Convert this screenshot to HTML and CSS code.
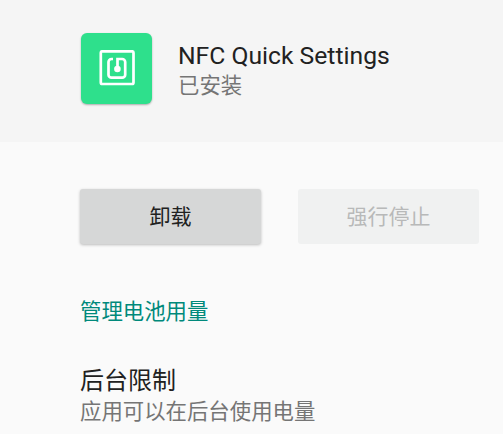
FILE: index.html
```html
<!DOCTYPE html>
<html lang="zh-CN">
  <head>
    <meta charset="UTF-8" />
    <meta name="viewport" content="width=device-width, initial-scale=1.0" />
    <title>NFC Quick Settings</title>
    <link rel="stylesheet" href="styles.css">
  </head>
  <body>
    <div class="app-header">
      <div class="app-icon">
        <svg width="36" height="36" viewBox="0 0 36 36" fill="none" stroke="#fff" stroke-width="2.7">
          <rect x="1.8" y="1.3" width="32.7" height="32.7" rx="1.5" />
          <path d="M14 9h-1.5a3 3 0 0 0-3 3v12.7a3 3 0 0 0 3 3h10.7a3 3 0 0 0 3-3V12a3 3 0 0 0-3-3h-4.7v10" />
          <circle cx="18.4" cy="19" r="3.3" fill="#fff" stroke="none" />
        </svg>
      </div>
      <div class="app-info">
        <div class="app-name">NFC Quick Settings</div>
        <div class="app-status">已安装</div>
      </div>
    </div>
    <div class="actions">
      <button class="button button-primary">卸载</button>
      <button class="button button-disabled">强行停止</button>
    </div>
    <a class="link" href="#">管理电池用量</a>
    <div class="setting">
      <div class="setting-title">后台限制</div>
      <div class="setting-desc">应用可以在后台使用电量</div>
    </div>
  </body>
</html>
```

FILE: styles.css
```css
* {
  margin: 0;
  padding: 0;
  box-sizing: border-box;
}

html, body {
  height: 100%;
  overflow: hidden;
}

body {
  background: #fafafa;
  font-family: Roboto, "Noto Sans CJK SC", sans-serif;
}

.app-header {
  display: flex;
  align-items: center;
  height: 142px;
  padding: 0 0 6px 81px;
  background: #f5f5f5;
}

.app-icon {
  display: flex;
  justify-content: center;
  align-items: center;
  width: 71px;
  height: 71px;
  border-radius: 6px;
  background: #2ee08c;
  box-shadow: rgba(0, 0, 0, 0.3) 0px 1px 2px;
}

.app-info {
  margin-left: 26px;
  padding-top: 5px;
}

.app-name {
  font-size: 24.7px;
  line-height: 30px;
  color: #212121;
}

.app-status {
  font-size: 21.4px;
  line-height: 30px;
  color: #757575;
}

.actions {
  display: flex;
  gap: 37px;
  margin: 47px 0 0 80px;
}

.button {
  width: 181px;
  height: 55px;
  padding-bottom: 3px;
  border: none;
  border-radius: 3px;
  font-family: inherit;
  font-size: 21px;
}

.button-primary {
  background: #d6d7d7;
  color: #212121;
  box-shadow: rgba(0, 0, 0, 0.25) 0px 1px 3px;
}

.button-disabled {
  background: #f0f1f1;
  color: #b8b9b9;
}

.link {
  display: block;
  margin: 53px 0 0 80px;
  font-size: 21.4px;
  line-height: 30px;
  color: #00897b;
  text-decoration: none;
}

.setting {
  margin: 38px 0 0 80px;
}

.setting-title {
  font-size: 24px;
  line-height: 32px;
  color: #212121;
}

.setting-desc {
  font-size: 21.4px;
  line-height: 30px;
  color: #757575;
}
```
